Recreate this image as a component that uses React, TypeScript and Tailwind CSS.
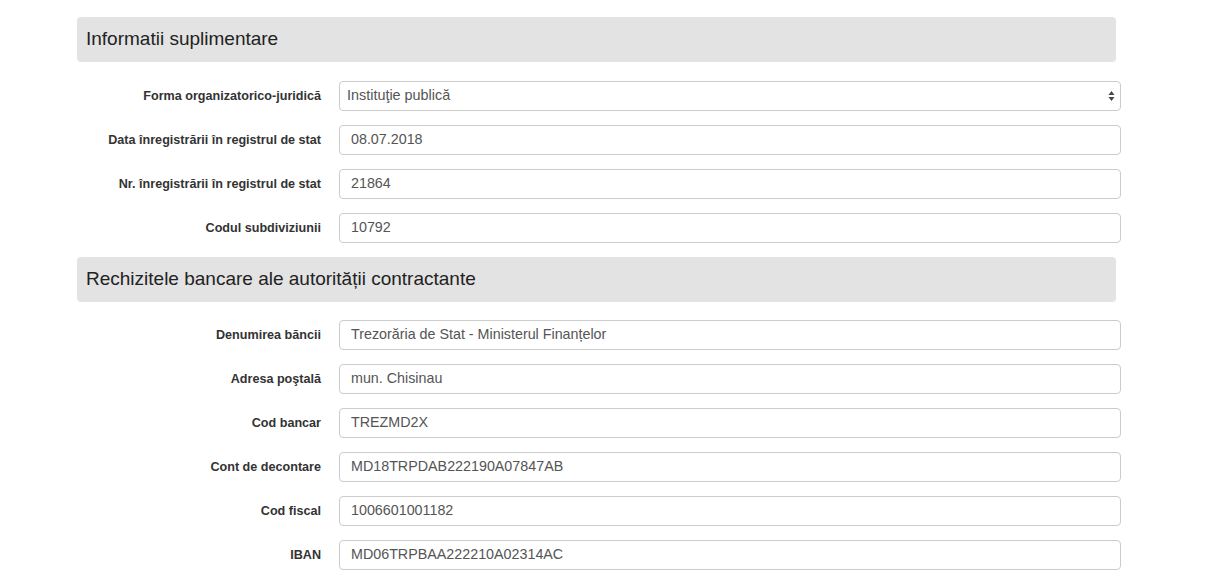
import React from "react";

const font = { fontFamily: '"Liberation Sans", Arial, Helvetica, sans-serif' };

function Header({ title, className = "" }: { title: string; className?: string }) {
  return (
    <div className={`ml-[77px] w-[1039px] h-[45px] bg-[#e3e3e3] rounded-[4px] flex items-center pl-[9px] ${className}`}>
      <span className="text-[19px] text-[#222] leading-none -mt-[2px]">{title}</span>
    </div>
  );
}

function Row({ label, value, select = false }: { label: string; value: string; select?: boolean }) {
  return (
    <div className="flex items-center h-[30px]">
      <div className="w-[321px] text-right text-[12.6px] font-bold text-[#333]">{label}</div>
      {select ? (
        <div className="ml-[18px] w-[782px] h-[30px] border border-[#cccccc] rounded-[4px] bg-white flex items-center pl-[7px] pr-[5px] justify-between">
          <span className="text-[14.4px] text-[#555]">{value}</span>
          <svg width="7" height="12" viewBox="0 0 7 12">
            <polygon points="3.5,1 6.5,5 0.5,5" fill="#444" />
            <polygon points="3.5,11 6.5,7 0.5,7" fill="#444" />
          </svg>
        </div>
      ) : (
        <div className="ml-[18px] w-[782px] h-[30px] border border-[#cccccc] rounded-[4px] bg-white flex items-center pl-[11px]">
          <span className="text-[14.3px] text-[#555]">{value}</span>
        </div>
      )}
    </div>
  );
}

export default function App() {
  return (
    <div style={font} className="w-[1210px] h-[583px] bg-white pt-[17px] overflow-hidden">
      <Header title="Informatii suplimentare" />
      <div className="flex flex-col gap-[14px] mt-[19px]">
        <Row label="Forma organizatorico-juridică" value="Instituţie publică" select />
        <Row label="Data înregistrării în registrul de stat" value="08.07.2018" />
        <Row label="Nr. înregistrării în registrul de stat" value="21864" />
        <Row label="Codul subdiviziunii" value="10792" />
      </div>
      <Header title="Rechizitele bancare ale autorității contractante" className="mt-[14px]" />
      <div className="flex flex-col gap-[14px] mt-[18px]">
        <Row label="Denumirea băncii" value="Trezorăria de Stat - Ministerul Finanțelor" />
        <Row label="Adresa poştală" value="mun. Chisinau" />
        <Row label="Cod bancar" value="TREZMD2X" />
        <Row label="Cont de decontare" value="MD18TRPDAB222190A07847AB" />
        <Row label="Cod fiscal" value="1006601001182" />
        <Row label="IBAN" value="MD06TRPBAA222210A02314AC" />
      </div>
    </div>
  );
}
